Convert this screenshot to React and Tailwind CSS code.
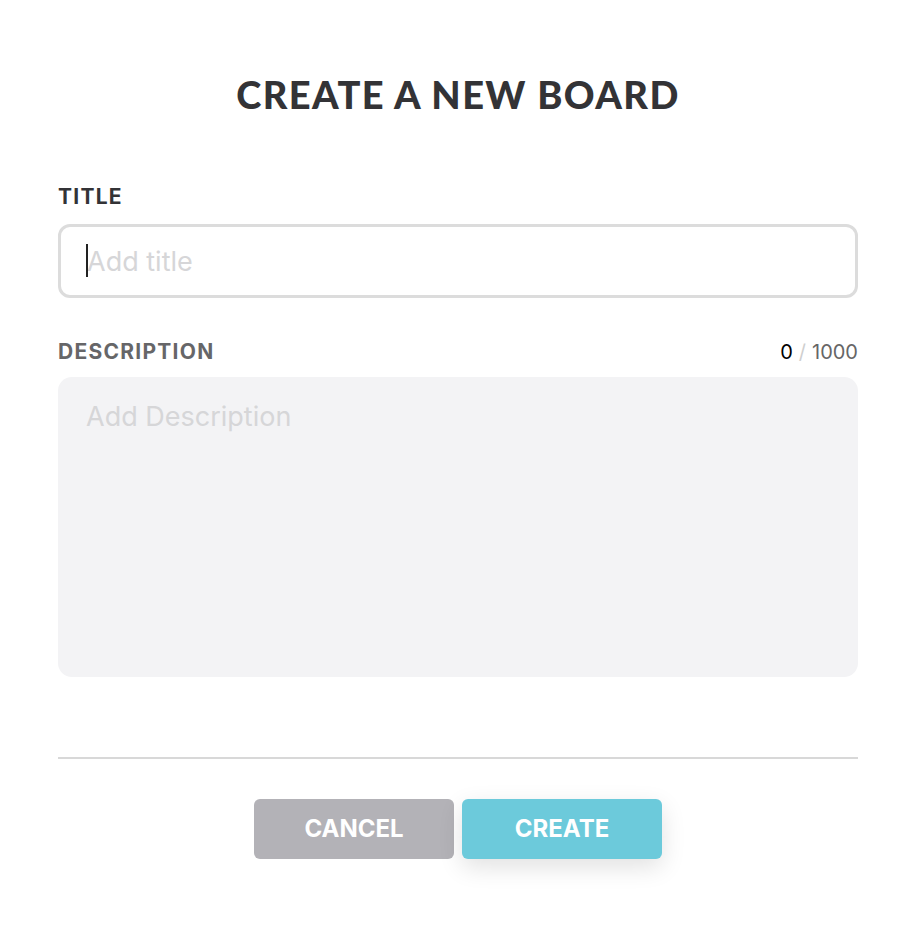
import React, { useState } from 'react'

export default function App() {
    const [title, setTitle] = useState('')
    const [description, setDescription] = useState('')

    return (
        <div className="w-full min-h-[946px] bg-white pl-[58px] pr-[66px] pt-[72px]" style={{ fontFamily: 'Inter, "Noto Sans", sans-serif' }}>
            <h1
                className="text-center text-[38px] leading-[44px] font-black tracking-[0.037em] text-[#333336]"
                style={{ fontFamily: 'Lato, "Liberation Sans", sans-serif' }}
            >
                CREATE A NEW BOARD
            </h1>

            <label className="block mt-[68px] text-[21px] leading-[26px] font-bold tracking-[0.06em] text-[#333336]">
                TITLE
            </label>
            <div className="relative mt-[14px]">
                <input
                    type="text"
                    placeholder="Add title"
                    value={title}
                    onChange={(e) => setTitle(e.target.value)}
                    className="w-full h-[74px] rounded-[12px] border-[3px] border-[#dcdcdc] px-[26px] text-[27px] text-[#333] placeholder:text-[#d6d6d8] focus:outline-none"
                />
                {title === '' && (
                    <span className="absolute left-[28px] top-[20px] h-[33px] w-[2px] bg-[#222]" />
                )}
            </div>

            <div className="flex items-baseline justify-between mt-[39px]">
                <label className="text-[21px] leading-[26px] font-bold tracking-[0.06em] text-[#666668]">
                    DESCRIPTION
                </label>
                <span className="text-[20px] text-[#666]">
                    <span className="text-black">{description.length}</span>
                    <span className="text-[#cfcfcf] mx-[6px]">/</span>
                    1000
                </span>
            </div>
            <textarea
                placeholder="Add Description"
                value={description}
                maxLength={1000}
                onChange={(e) => setDescription(e.target.value)}
                className="block w-full h-[300px] mt-[10px] resize-none rounded-[14px] bg-[#f3f3f5] px-[28px] pt-[23px] pb-[20px] text-[27px] leading-[34px] text-[#333] placeholder:text-[#d6d6d8] focus:outline-none"
            />

            <div className="mt-[80px] h-[2px] bg-[#d8d8d8]" />

            <div className="flex justify-center gap-2 mt-[40px]">
                <button className="w-[200px] h-[60px] rounded-[6px] bg-[#b3b2b7] text-white text-[24px] font-bold">
                    CANCEL
                </button>
                <button className="w-[200px] h-[60px] rounded-[6px] bg-[#6ccadb] text-white text-[24px] font-bold shadow-[0_8px_24px_rgba(0,0,0,0.12)]">
                    CREATE
                </button>
            </div>
        </div>
    )
}
